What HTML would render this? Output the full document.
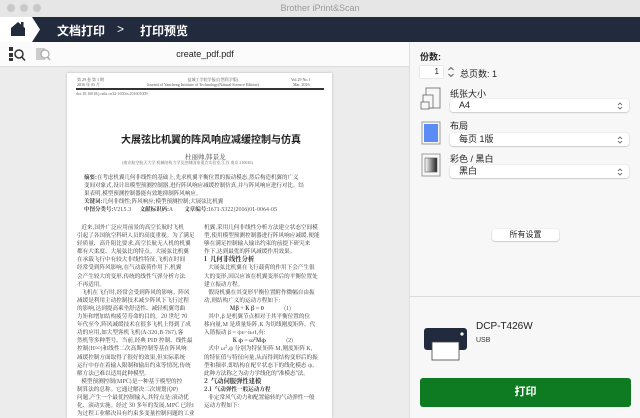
<!DOCTYPE html>
<html><head><meta charset="utf-8"><style>
*{margin:0;padding:0;box-sizing:border-box}
body{width:640px;height:418px;overflow:hidden;background:#ececec;font-family:"Liberation Sans","Noto Sans CJK SC",sans-serif;position:relative}
.a{position:absolute}
.sel{position:absolute;left:450px;width:179px;height:13px;background:#fff;border-radius:3px;box-shadow:0 0.5px 1.5px rgba(0,0,0,.3);font-size:9px;color:#222;padding:1px 0 0 9px;line-height:11px}
.sel svg{position:absolute;right:6px;top:3px}
.lb{position:absolute;left:450px;font-size:9px;color:#222}
.doc{font-family:"Liberation Serif","Noto Serif CJK SC",serif;color:#333;white-space:nowrap;overflow:hidden}
.col{position:absolute;width:117px;font-size:5.6px;line-height:8.1px;color:#333;font-family:"Noto Serif CJK SC",serif;white-space:nowrap;overflow:hidden}
</style></head><body>
<!-- title bar -->
<div class="a" style="left:0;top:0;width:640px;height:17px;background:#e6e6e6"></div>
<div class="a" style="left:7px;top:4px;width:8px;height:8px;border-radius:50%;background:#c9c9c9"></div>
<div class="a" style="left:20px;top:4px;width:8px;height:8px;border-radius:50%;background:#c9c9c9"></div>
<div class="a" style="left:33px;top:4px;width:8px;height:8px;border-radius:50%;background:#c9c9c9"></div>
<div class="a" style="left:0;top:3px;width:640px;text-align:center;font-size:9px;color:#9a9a9a">Brother iPrint&amp;Scan</div>
<!-- nav -->
<div class="a" style="left:0;top:17px;width:640px;height:25px;background:#222a3d"></div>
<svg class="a" style="left:0;top:17px" width="42" height="25"><polygon points="0,0 32,0 40,12.5 32,25 0,25" fill="#fff"/><path d="M11 11 L18 5 L25 11 V19 H11 Z" fill="#222a3d"/><rect x="21" y="5" width="2.5" height="5" fill="#222a3d"/></svg>
<div class="a" style="left:57px;top:22px;font-size:12px;color:#fff;font-weight:bold">文档打印</div>
<div class="a" style="left:117px;top:22px;font-size:12px;color:#fff">&gt;</div>
<div class="a" style="left:140px;top:22px;font-size:12px;color:#fff;font-weight:bold">打印预览</div>
<!-- toolbar -->
<div class="a" style="left:0;top:42px;width:409px;height:25px;background:#fbfbfb;border-bottom:1px solid #dcdcdc"></div>
<svg class="a" style="left:8px;top:46px" width="18" height="16"><rect x="1" y="1" width="4" height="4" fill="#333"/><rect x="1" y="7" width="4" height="4" fill="#333"/><rect x="1" y="12" width="4" height="3" fill="#333"/><circle cx="11" cy="8" r="4" fill="none" stroke="#333" stroke-width="1.5"/><line x1="13.8" y1="11" x2="17" y2="14.5" stroke="#333" stroke-width="1.6"/></svg>
<svg class="a" style="left:35px;top:46px" width="16" height="16"><rect x="1" y="2" width="9" height="12" fill="#ccc"/><circle cx="10" cy="8" r="4" fill="#fff" stroke="#aaa" stroke-width="1.2"/><line x1="12.5" y1="11" x2="15" y2="14" stroke="#aaa" stroke-width="1.4"/></svg>
<div class="a" style="left:0;top:49px;width:410px;text-align:center;font-size:9px;color:#222">create_pdf.pdf</div>
<!-- page -->
<div class="a doc" style="left:67px;top:73px;width:265px;height:345px;background:#fff;box-shadow:0 0 2px rgba(0,0,0,.25)">
<div class="a" style="left:10px;top:4px;font-size:4px;color:#555;line-height:5px">第 29 卷 第 1 期<br>2016 年 03 月</div>
<div class="a" style="left:80px;top:4px;font-size:4px;color:#555;line-height:5px;text-align:center">&nbsp;&nbsp;&nbsp;&nbsp;&nbsp;&nbsp;&nbsp;&nbsp;&nbsp;&nbsp;&nbsp;&nbsp;&nbsp;&nbsp;&nbsp;&nbsp;&nbsp;&nbsp;&nbsp;&nbsp;盐城工学院学报(自然科学版)<br>Journal of Yancheng Institute of Technology(Natural Science Edition)</div>
<div class="a" style="left:224px;top:4px;font-size:4px;color:#555;line-height:5px">Vol.29 No.1<br>&nbsp;&nbsp;Mar. 2016</div>
<div class="a" style="left:9px;top:15px;width:248px;height:1.5px;background:#333"></div>
<div class="a" style="left:9px;top:18px;font-size:4px;color:#666">doi:10.16018/j.cnki.cn32-1650/n.201601009</div>
<div class="a" style="left:54px;top:58px;font-size:10px;font-weight:bold;color:#222;font-family:'Noto Sans CJK SC',sans-serif">大展弦比机翼的阵风响应减缓控制与仿真</div>
<div class="a" style="left:118px;top:79px;font-size:6.5px;color:#444">杜丽帅,韩景龙</div>
<div class="a" style="left:55px;top:87px;font-size:4px;color:#666">(南京航空航天大学 机械结构力学及控制国家重点实验室,江苏 南京 210016)</div>
<div class="a" style="left:17px;top:100px;font-size:5.5px;line-height:8px;color:#333;font-family:'Noto Serif CJK SC',serif"><b>摘要:</b>在考虑机翼几何非线性的基础上,先求机翼平衡位置的振动模态,然后构造机翼的广义<br>变间对象式,设计出模型预测控制器,进行阵风响应减缓控制仿真,并与阵风响应进行对比。结<br>果表明,模型预测控制器能有效地抑制阵风响应。<br><b>关键词:</b>几何非线性;阵风响应;模型预测控制;大展弦比机翼<br><b>中图分类号:</b>V215.3&nbsp;&nbsp;&nbsp;&nbsp;&nbsp;&nbsp;<b>文献标识码:</b>A&nbsp;&nbsp;&nbsp;&nbsp;&nbsp;&nbsp;&nbsp;&nbsp;<b>文章编号:</b>1671-5322(2016)01-0064-05</div>
<div class="col" style="left:10px;top:150px">&nbsp;&nbsp;&nbsp;近来,国外广泛应用前景的高空长航时飞机<br>引起了各国航空科研人员的高度重视。为了满足<br>轻质量、高升阻比要求,高空长航无人机的机翼<br>都有大柔度、大展弦比的特点。大展弦比机翼<br>在承载飞行中有较大非线性特征,飞机在时间<br>经常受到阵风影响,在气动载荷作用下,机翼<br>会产生较大的变形,传统的线性气弹分析方法<br>不再适用。<br>&nbsp;&nbsp;&nbsp;飞机在飞行时,经常会受到阵风的影响。阵风<br>减缓是利用主动控制技术减少阵风下飞行过程<br>的影响,达到提高乘坐舒适性、减轻机翼弯曲<br>力矩和增加结构疲劳寿命的目的。20 世纪 70<br>年代至今,阵风减缓技术在很多飞机上得到了成<br>功的应用,如大型客机飞机(A-320,B-787),客<br>然机等多种型号。当前,经典 PID 控制、线性最<br>控制(H∞)和线性二次高斯控制等基在阵风响<br>减缓控制方面取得了很好的效果,但实际系统<br>运行中存在着输入限制和输出约束等情况,传统<br>解方法已难以适用此种模型。<br>&nbsp;&nbsp;&nbsp;模型预测控制(MPC)是一种基于模型的控<br>制算法的总称。它通过解决二次规划(QP)<br>问题,产生一个最优控制输入,其特点是:滚动优<br>化、滚动实施。经过 30 多年的发展,MPC 已经成<br>为过程工业解决具有约束多变量控制问题的工业<br>标准。</div>
<div class="col" style="left:137px;top:150px">机翼,采用几何非线性分析方法建立状态空间模<br>型,使用模型预测控制器进行阵风响应减缓,便能<br>够在满足控制输入输出约束的前提下研究来<br>作下,达到最优的阵风减缓作用效果。<br><b style="font-size:6.3px">1&nbsp;&nbsp;几何非线性分析</b><br>&nbsp;&nbsp;&nbsp;大展弦比机翼在飞行载荷的作用下会产生很<br>大的变形,因以应该在机翼变形后的平衡位置处<br>建立振动方程。<br>&nbsp;&nbsp;&nbsp;假设机翼在其变形平衡位置附作微幅自由振<br>动,则结构广义的运动方程如下:<br>&nbsp;&nbsp;&nbsp;&nbsp;&nbsp;&nbsp;&nbsp;&nbsp;&nbsp;&nbsp;&nbsp;&nbsp;&nbsp;&nbsp;&nbsp;&nbsp;&nbsp;&nbsp;<b>Mβ + K β = 0</b>&nbsp;&nbsp;&nbsp;&nbsp;&nbsp;&nbsp;&nbsp;&nbsp;&nbsp;&nbsp;&nbsp;&nbsp;&nbsp;&nbsp;(1)<br>&nbsp;&nbsp;&nbsp;其中,β 是机翼节点相对于其平衡位置的位<br>移向量,M 是质量矩阵,K 为切线刚度矩阵。代<br>入谐振动 β = φe^iωt,有:<br>&nbsp;&nbsp;&nbsp;&nbsp;&nbsp;&nbsp;&nbsp;&nbsp;&nbsp;&nbsp;&nbsp;&nbsp;&nbsp;&nbsp;&nbsp;&nbsp;&nbsp;&nbsp;&nbsp;&nbsp;<b>K φ = ω²Mφ</b>&nbsp;&nbsp;&nbsp;&nbsp;&nbsp;&nbsp;&nbsp;&nbsp;&nbsp;&nbsp;&nbsp;&nbsp;&nbsp;&nbsp;(2)<br>&nbsp;&nbsp;&nbsp;式中 ω²,φ 分别为特征矩阵 M,刚度矩阵 K,<br>的特征值与特征向量,从而得到结构变形后的振<br>型和频率,即结构在配平状态下的线化模态 φ,<br>此种方法称之为动力学线化的"准模态"法。<br><b style="font-size:6.3px">2&nbsp;&nbsp;气动伺服弹性建模</b><br><b>2.1&nbsp;&nbsp;气动弹性一般运动方程</b><br>&nbsp;&nbsp;&nbsp;非定常风气动力和配置输转的气动弹性一般<br>运动方程如下:</div>
</div>
<!-- right panel -->
<div class="a" style="left:409px;top:42px;width:231px;height:376px;background:#f7f7f7;border-left:1px solid #dedede"></div>
<div class="a" style="left:420px;top:50px;font-size:9px;color:#222;font-weight:bold">份数:</div>
<div class="a" style="left:420px;top:66px;width:23px;height:12px;background:#fff;box-shadow:0 0 1px rgba(0,0,0,.3);font-size:8px;text-align:right;padding-right:4px;line-height:12px;color:#222">1</div>
<svg class="a" style="left:447px;top:65px" width="8" height="14"><path d="M1.5 5 L4 2.5 L6.5 5 M1.5 9 L4 11.5 L6.5 9" fill="none" stroke="#555" stroke-width="0.9"/></svg>
<div class="a" style="left:460px;top:67px;font-size:9px;color:#222">总页数: 1</div>
<svg class="a" style="left:420px;top:87px" width="22" height="24"><rect x="6" y="1" width="14" height="20" fill="none" stroke="#666" stroke-width="0.8"/><rect x="3" y="8" width="10" height="13" fill="#f7f7f7" stroke="#666" stroke-width="0.8"/><rect x="1" y="15" width="8" height="7" fill="#f7f7f7" stroke="#666" stroke-width="0.8"/></svg>
<div class="lb" style="top:87px">纸张大小</div>
<div class="sel" style="top:99px">A4<svg width="6" height="8"><path d="M1 3 L3 1 L5 3 M1 5 L3 7 L5 5" fill="none" stroke="#555" stroke-width="0.8"/></svg></div>
<svg class="a" style="left:421px;top:121px" width="20" height="24"><rect x="1" y="1" width="18" height="22" fill="none" stroke="#888" stroke-width="0.8"/><rect x="3" y="3" width="14" height="18" fill="#5b8cf5"/></svg>
<div class="lb" style="top:119px">布局</div>
<div class="sel" style="top:133px">每页 1版<svg width="6" height="8"><path d="M1 3 L3 1 L5 3 M1 5 L3 7 L5 5" fill="none" stroke="#555" stroke-width="0.8"/></svg></div>
<svg class="a" style="left:421px;top:153px" width="20" height="24"><rect x="1" y="1" width="18" height="22" fill="none" stroke="#888" stroke-width="0.8"/><defs><linearGradient id="g"><stop offset="0" stop-color="#fff"/><stop offset="1" stop-color="#222"/></linearGradient></defs><rect x="4" y="5" width="12" height="14" fill="url(#g)" stroke="#555" stroke-width="0.6"/></svg>
<div class="lb" style="top:152px">彩色 / 黑白</div>
<div class="sel" style="top:165px">黑白<svg width="6" height="8"><path d="M1 3 L3 1 L5 3 M1 5 L3 7 L5 5" fill="none" stroke="#555" stroke-width="0.8"/></svg></div>
<div class="a" style="left:492px;top:229px;width:67px;height:12px;background:#fff;border-radius:3px;box-shadow:0 0.5px 1.5px rgba(0,0,0,.3);font-size:8px;text-align:center;line-height:12px;color:#222">所有设置</div>
<div class="a" style="left:410px;top:296px;width:230px;height:1px;background:#dcdcdc"></div>
<svg class="a" style="left:423px;top:326px" width="46" height="36"><rect x="1" y="2" width="43" height="22" rx="3" fill="#222a3d"/><circle cx="39" cy="8" r="1.6" fill="#fff"/><rect x="9" y="16" width="27" height="18" fill="#fff" stroke="#444" stroke-width="0.8"/></svg>
<div class="a" style="left:476px;top:321px;font-size:10px;color:#222">DCP-T426W</div>
<div class="a" style="left:476px;top:337px;font-size:7px;color:#333">USB</div>
<div class="a" style="left:420px;top:378px;width:211px;height:29px;background:#0e7b22;border-radius:3px;color:#fff;font-weight:bold;font-size:11px;text-align:center;line-height:29px">打印</div>
</body></html>
